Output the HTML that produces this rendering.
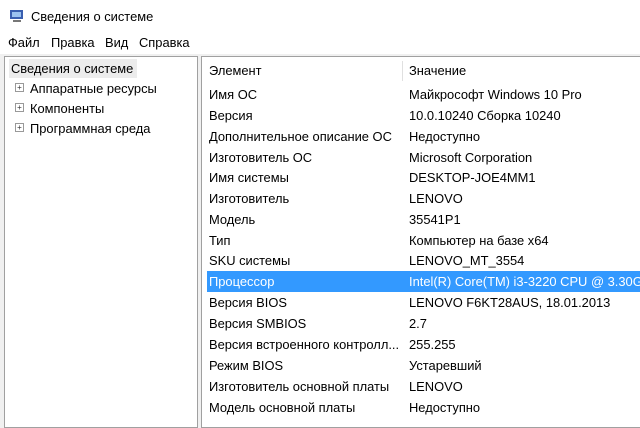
<!DOCTYPE html><html><head><meta charset="utf-8"><style>
body{margin:0;width:640px;height:420px;overflow:hidden;background:#f0f0f0;font-family:"Liberation Sans","DejaVu Sans",sans-serif;font-size:12.9px;color:#000;position:relative}
.t{position:absolute;white-space:nowrap}
#title{position:absolute;left:0;top:0;width:640px;height:32px;background:#fff}
#menu{position:absolute;left:0;top:32px;width:640px;height:22px;background:#fff}
#lp{position:absolute;left:4px;top:56px;width:192px;height:370px;background:#fff;border:1px solid #a0a0a0}
#rp{position:absolute;left:201px;top:56px;width:445px;height:370px;background:#fff;border:1px solid #a0a0a0;overflow:hidden}
.row{position:absolute;left:0;width:450px;height:21px;line-height:21px}
.row span{position:absolute;white-space:nowrap}
.c1{left:7px}.c2{left:207px}
.pl{position:absolute;width:7px;height:7px;border:1px solid #999;font-size:8px;line-height:7px;text-align:center;color:#333}
</style></head><body>
<div id="title">
<svg style="position:absolute;left:9px;top:8px" width="16" height="16"><rect x="1" y="2" width="13" height="9" fill="#3a5fb0"/><rect x="3" y="4" width="9" height="5" fill="#9cc3f0"/><rect x="4" y="12" width="8" height="2" fill="#777"/></svg>
<div class="t" style="left:31px;top:9px">Сведения о системе</div></div>
<div id="menu">
<div class="t" style="left:8px;top:3px">Файл</div>
<div class="t" style="left:51px;top:3px">Правка</div>
<div class="t" style="left:105px;top:3px">Вид</div>
<div class="t" style="left:139px;top:3px">Справка</div></div>
<div id="lp">
<div class="t" style="left:4px;top:2px;height:19px;line-height:19px;padding:0 4px 0 2px;background:#ececec">Сведения о системе</div>
<div class="pl" style="left:10px;top:26px">+</div><div class="t" style="left:25px;top:22px;line-height:19px">Аппаратные ресурсы</div>
<div class="pl" style="left:10px;top:46px">+</div><div class="t" style="left:25px;top:42px;line-height:19px">Компоненты</div>
<div class="pl" style="left:10px;top:66px">+</div><div class="t" style="left:25px;top:62px;line-height:19px">Программная среда</div>
</div>
<div id="rp">
<div class="row" style="top:2px;height:23px;line-height:23px"><span class="c1">Элемент</span><span style="left:200px;top:2px;height:20px;border-left:1px solid #e0e0e0"></span><span class="c2">Значение</span></div>
<div class="row" style="top:27px"><span class="c1">Имя ОС</span><span class="c2">Майкрософт Windows 10 Pro</span></div>
<div class="row" style="top:48px"><span class="c1">Версия</span><span class="c2">10.0.10240 Сборка 10240</span></div>
<div class="row" style="top:68.5px"><span class="c1">Дополнительное описание ОС</span><span class="c2">Недоступно</span></div>
<div class="row" style="top:89.5px"><span class="c1">Изготовитель ОС</span><span class="c2">Microsoft Corporation</span></div>
<div class="row" style="top:110px"><span class="c1">Имя системы</span><span class="c2">DESKTOP-JOE4MM1</span></div>
<div class="row" style="top:131px"><span class="c1">Изготовитель</span><span class="c2">LENOVO</span></div>
<div class="row" style="top:151.5px"><span class="c1">Модель</span><span class="c2">35541P1</span></div>
<div class="row" style="top:172.5px"><span class="c1">Тип</span><span class="c2">Компьютер на базе x64</span></div>
<div class="row" style="top:193px"><span class="c1">SKU системы</span><span class="c2">LENOVO_MT_3554</span></div>
<div class="row" style="top:214px;left:5px;background:#3399ff;color:#fff"><span class="c1" style="left:2px">Процессор</span><span class="c2" style="left:202px">Intel(R) Core(TM) i3-3220 CPU @ 3.30GHz</span></div>
<div class="row" style="top:235px"><span class="c1">Версия BIOS</span><span class="c2">LENOVO F6KT28AUS, 18.01.2013</span></div>
<div class="row" style="top:256px"><span class="c1">Версия SMBIOS</span><span class="c2">2.7</span></div>
<div class="row" style="top:277px"><span class="c1">Версия встроенного контролл...</span><span class="c2">255.255</span></div>
<div class="row" style="top:298px"><span class="c1">Режим BIOS</span><span class="c2">Устаревший</span></div>
<div class="row" style="top:319px"><span class="c1">Изготовитель основной платы</span><span class="c2">LENOVO</span></div>
<div class="row" style="top:340px"><span class="c1">Модель основной платы</span><span class="c2">Недоступно</span></div>
</div>
</body></html>
